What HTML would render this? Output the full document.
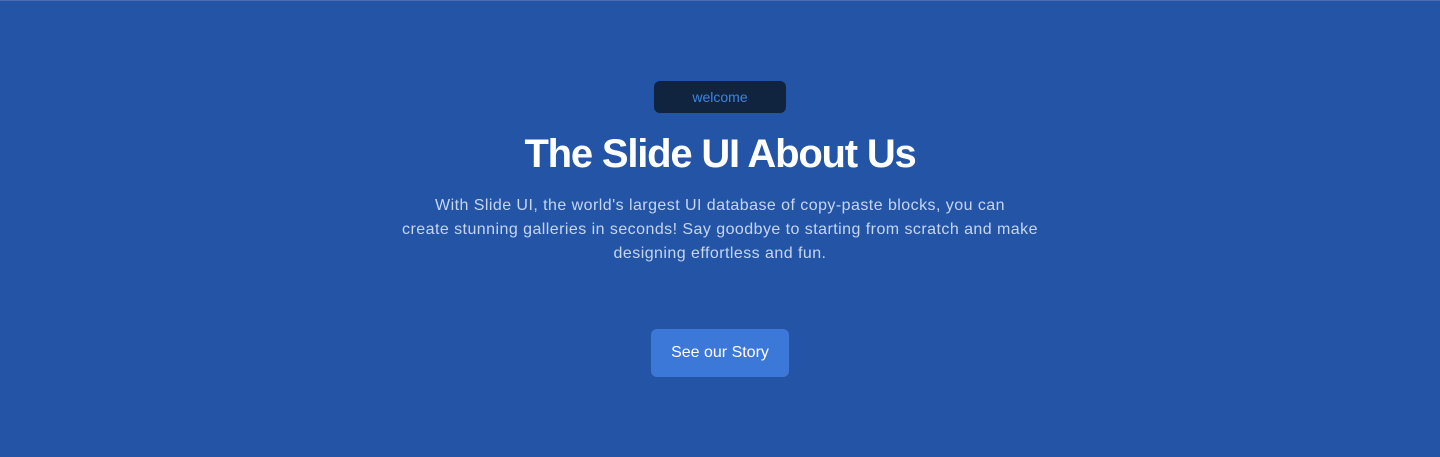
<!DOCTYPE html>
<html><head><style>
html,body{margin:0;padding:0;}
body{width:1440px;height:457px;background:#2354a5;font-family:"Liberation Sans",sans-serif;position:relative;overflow:hidden;border-top:1px solid #4a6fb0;box-sizing:border-box;}
.badge{position:absolute;left:654px;top:80px;width:132px;height:32px;border-radius:6px;background:#10233f;color:#3b86e0;font-size:14px;line-height:32px;text-align:center;}
h1{position:absolute;left:0;width:1440px;top:128px;margin:0;text-align:center;color:#fff;font-size:40px;font-weight:bold;line-height:50px;letter-spacing:-1.2px;}
p{position:absolute;left:0;width:1440px;top:193px;margin:0;text-align:center;color:#c5d6f3;font-size:16px;line-height:24px;white-space:nowrap;letter-spacing:0.45px;}
.btn{position:absolute;left:651px;top:328px;width:138px;height:48px;border-radius:6px;background:#3b78d8;color:#fff;font-size:16px;line-height:48px;text-align:center;}
</style></head><body>
<div class="badge">welcome</div>
<h1>The Slide UI About Us</h1>
<p>With Slide UI, the world's largest UI database of copy-paste blocks, you can<br>create stunning galleries in seconds! Say goodbye to starting from scratch and make<br>designing effortless and fun.</p>
<div class="btn">See our Story</div>
</body></html>
